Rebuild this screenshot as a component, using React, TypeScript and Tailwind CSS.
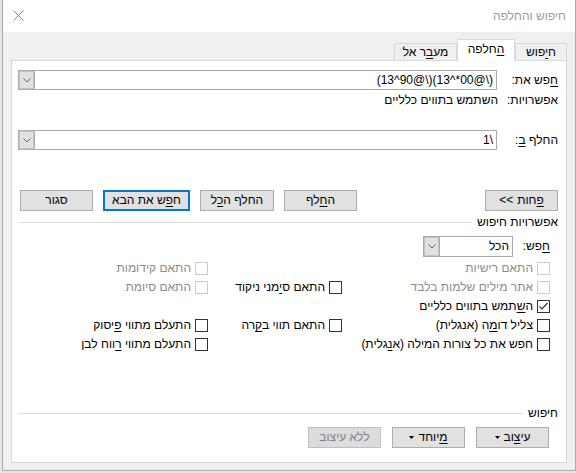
import type { ReactNode } from 'react';

const Chevron = () => (
  <svg width="8" height="5" viewBox="0 0 8 5">
    <path d="M0.5 0.5L4 4L7.5 0.5" fill="none" stroke="#606060" strokeWidth="1" />
  </svg>
);

const Caret = () => (
  <svg width="5" height="3" viewBox="0 0 5 3">
    <path d="M0 0H5L2.5 3Z" fill="#000" />
  </svg>
);

// visual-order text (used for the regex fields, which Word shows mirrored)
const Ltr = ({ children }: { children: ReactNode }) => (
  <span className="whitespace-pre [direction:ltr] [unicode-bidi:bidi-override]">{children}</span>
);

function Combo({ children, className }: { children?: ReactNode; className: string }) {
  return (
    <div className={`flex border border-[#a9a9a9] bg-white ${className}`}>
      <div className="flex flex-1 items-center overflow-hidden pr-[3px]">{children}</div>
      <div className="flex w-[16px] items-center justify-center border-r border-[#a9a9a9] bg-[#e1e1e1] shadow-[inset_0_0_0_1px_#c4c4c4]">
        <Chevron />
      </div>
    </div>
  );
}

function Btn({
  children,
  w = 'w-[73px]',
  primary,
  disabled,
  caret,
}: {
  children: ReactNode;
  w?: string;
  primary?: boolean;
  disabled?: boolean;
  caret?: boolean;
}) {
  const tone = primary
    ? 'border-2 border-[#0078d7] bg-[#e1e1e1] text-black'
    : disabled
      ? 'border border-[#bfbfbf] bg-[#dcdcdc] text-[#838383]'
      : 'border border-[#adadad] bg-[#e1e1e1] text-black';
  return (
    <div className={`flex h-[21px] items-center justify-center gap-[4px] ${w} ${tone}`}>
      <span className="whitespace-nowrap">{children}</span>
      {caret && <Caret />}
    </div>
  );
}

function Check({
  children,
  checked,
  disabled,
}: {
  children?: ReactNode;
  checked?: boolean;
  disabled?: boolean;
}) {
  if (!children) return <div />;
  return (
    <div className={`flex h-[19px] items-center gap-[4px] ${disabled ? 'text-[#8c8c8c]' : 'text-black'}`}>
      <div
        className={`flex h-[13px] w-[13px] shrink-0 items-center justify-center border bg-white ${
          disabled ? 'border-[#cccccc]' : 'border-[#333333]'
        }`}
      >
        {checked && (
          <svg width="11" height="11" viewBox="0 0 11 11">
            <path d="M1.5 5.5L4 8L9.5 2" fill="none" stroke="#333" strokeWidth="1.2" />
          </svg>
        )}
      </div>
      <span className="whitespace-nowrap">{children}</span>
    </div>
  );
}

const U = ({ children }: { children: ReactNode }) => <span className="underline underline-offset-2">{children}</span>;

export default function App() {
  return (
    <div className="h-[473px] w-[576px] bg-[#e6e6e6] text-[12px] leading-[15px] font-['Liberation_Sans','DejaVu_Sans',sans-serif]">
      <div dir="rtl" className="ml-[2px] flex h-[471px] w-[574px] flex-col border-x border-b border-[#aaaaaa] bg-[#f0f0f0]">
        {/* title bar */}
        <div className="flex h-[32px] items-center justify-between bg-white pl-[10px] pr-[9px]">
          <span className="text-[#9a9a9a]">חיפוש והחלפה</span>
          <svg width="11" height="11" viewBox="0 0 11 11" className="mb-[2px]">
            <path d="M0.5 0.5L10.5 10.5M10.5 0.5L0.5 10.5" stroke="#8a8a8a" strokeWidth="1" />
          </svg>
        </div>

        {/* tabs */}
        <div className="flex h-[28px] items-end px-[8px]">
          <div className="flex h-[17px] w-[52px] items-center justify-center border-x border-t border-[#d9d9d9] bg-[#f0f0f0]">
            <span>
              ח<U>י</U>פוש
            </span>
          </div>
          <div className="relative z-10 -mb-px flex h-[22px] w-[58px] items-center justify-center border-x border-t border-[#d9d9d9] bg-white pb-[2px]">
            <span>
              <U>ה</U>חלפה
            </span>
          </div>
          <div className="flex h-[17px] w-[63px] items-center justify-center border-x border-t border-[#d9d9d9] bg-[#f0f0f0]">
            <span>
              מע<U>ב</U>ר אל
            </span>
          </div>
        </div>

        {/* panel */}
        <div className="mx-[8px] flex h-[403px] flex-col border border-[#d9d9d9] bg-white pl-[6px] pr-[8px] pt-[9px]">
          <div className="flex h-[20px] items-center">
            <span className="w-[61px]">
              <U>ח</U>פש את:
            </span>
            <Combo className="h-[20px] flex-1">
              <Ltr>{'(13^90@\\)(13^*00@\\)'}</Ltr>
            </Combo>
          </div>
          <div className="flex h-[20px] items-center">
            <span className="w-[60px]">אפשרויות:</span>
            <span>השתמש בתווים כלליים</span>
          </div>
          <div className="mt-[20px] flex h-[20px] items-center">
            <span className="w-[61px]">
              החלף <U>ב</U>:
            </span>
            <Combo className="h-[20px] flex-1">
              <Ltr>{'1\\'}</Ltr>
            </Combo>
          </div>

          {/* buttons */}
          <div className="mt-[40px] flex justify-between">
            <div className="flex h-[21px] w-[73px] items-center justify-center gap-[4px] border border-[#adadad] bg-[#e1e1e1]">
              <span>
                <U>פ</U>חות
              </span>
              <Ltr>{'<<'}</Ltr>
            </div>
            <div className="flex gap-[10px]">
              <Btn>
                ה<U>ח</U>לף
              </Btn>
              <Btn w="w-[74px]">
                החלף ה<U>כ</U>ל
              </Btn>
              <Btn w="w-[87px]" primary>
                ח<U>פ</U>ש את הבא
              </Btn>
              <div className="ml-[2px]">
                <Btn>סגור</Btn>
              </div>
            </div>
          </div>

          {/* search options */}
          <div className="mt-[3px] flex h-[16px] items-center gap-[5px]">
            <span>אפשרויות חיפוש</span>
            <div className="h-px flex-1 bg-[#dcdcdc]" />
          </div>
          <div className="mr-[8px] mt-[6px] flex h-[21px] items-center">
            <span className="w-[37px]">
              <U>ח</U>פש:
            </span>
            <Combo className="h-[21px] w-[90px]">
              <span>הכל</span>
            </Combo>
          </div>

          <div className="mr-[8px] mt-[2px] grid grid-cols-[208px_134px_1fr]">
            <Check disabled>התאם רישיות</Check>
            <Check />
            <Check disabled>התאם קידומות</Check>

            <Check disabled>אתר מילים שלמות בלבד</Check>
            <Check>
              התאם ס<U>י</U>מני ניקוד
            </Check>
            <Check disabled>התאם סיומת</Check>

            <Check checked>
              ה<U>ש</U>תמש בתווים כלליים
            </Check>
            <Check />
            <Check />

            <Check>
              צליל דו<U>מ</U>ה (אנגלית)
            </Check>
            <Check>
              התאם תווי ב<U>ק</U>רה
            </Check>
            <Check>
              התעלם מתווי <U>פ</U>יסוק
            </Check>

            <Check>
              חפש את כל צורות המילה (א<U>נ</U>גלית)
            </Check>
            <Check />
            <Check>
              התעלם מתווי <U>ר</U>ווח לבן
            </Check>
          </div>

          {/* format section */}
          <div className="mt-[51px] flex h-[16px] items-center gap-[5px]">
            <span>חיפוש</span>
            <div className="h-px flex-1 bg-[#dcdcdc]" />
          </div>
          <div className="mr-[9px] mt-[6px] flex gap-[11px]">
            <Btn caret>
              עי<U>צ</U>וב
            </Btn>
            <Btn caret>
              <U>מ</U>יוחד
            </Btn>
            <Btn disabled>ללא עיצוב</Btn>
          </div>
        </div>
      </div>
    </div>
  );
}
